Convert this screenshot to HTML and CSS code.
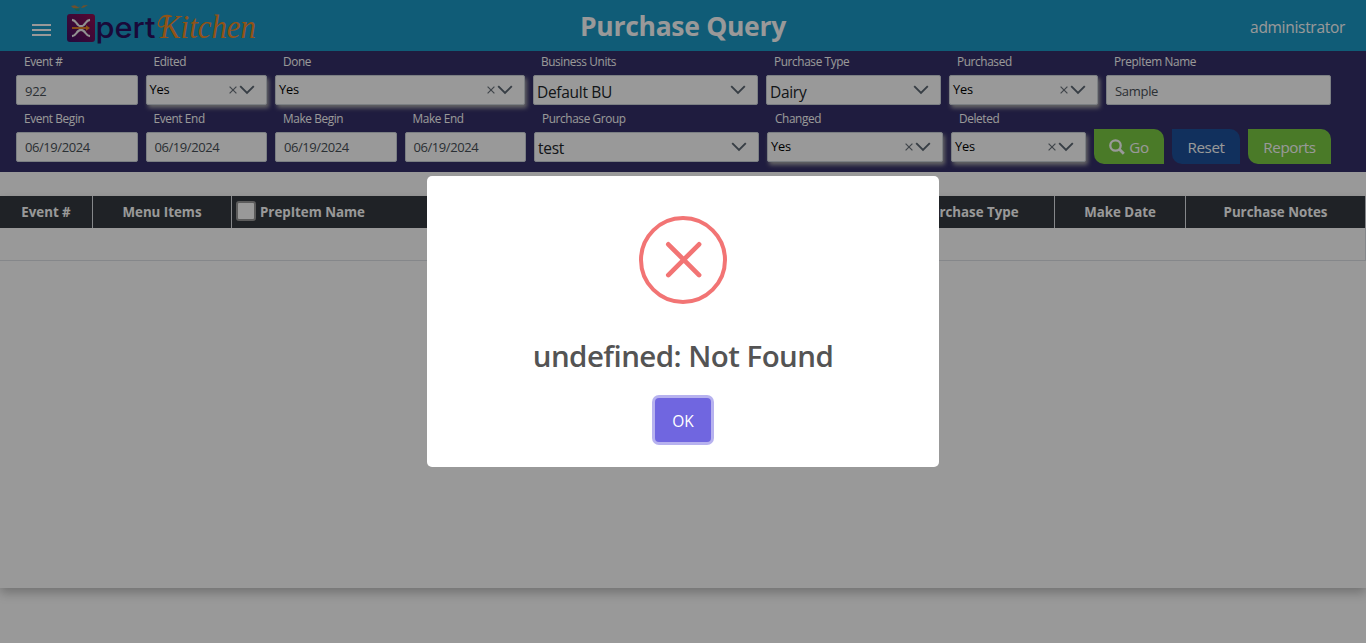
FILE: index.html
```html
<!DOCTYPE html>
<html lang="en">
<head>
<meta charset="utf-8">
<title>Purchase Query</title>
<link rel="stylesheet" href="styles.css">
</head>
<body>
<svg class="defs" width="0" height="0">
  <symbol id="chevron" viewBox="0 0 16 10"><path d="M1.2 1.2 8 8l6.8-6.8" fill="none" stroke="#5c6873" stroke-width="1.9"/></symbol>
  <symbol id="clear" viewBox="0 0 8 8"><path d="M.6.6l6.8 6.8M7.4.6.6 7.4" fill="none" stroke="#6c757d" stroke-width="1.2"/></symbol>
</svg>
<header class="topbar">
  <div class="brand">
    <div class="menu"><i></i><i></i><i></i></div>
    <svg class="logo" width="204" height="51" viewBox="0 0 204 51">
      <defs><linearGradient id="plum" x1="0" y1="1" x2="1" y2="0"><stop offset="0" stop-color="#3b1166"/><stop offset="1" stop-color="#940c50"/></linearGradient></defs>
      <path d="M5 6l4-.8 3 1.800 3-.5-4 2q-4 .5-6-2.500M17 5.500l5-.5-4 2.500-3 .5z" fill="#b8864a"/>
      <path d="M8 8.500l6 .3-1 2.200-3-.6" fill="#2f9c78"/>
      <rect x="1" y="14" width="28" height="28" rx="3" fill="url(#plum)"/>
      <path d="M6 19.800q2.500.2 4.500 3.200 2 3.200 4.500 3.200t4.500-3.200q2-3 4.500-3.200M6 36.200q2.500-.2 4.500-3.200 2-3.200 4.500-3.200t4.500 3.200q2 3 4.500 3.200" fill="none" stroke="#f2f2f2" stroke-width="2.200"/>
      <path d="M6 28h14.500" stroke="#ee8c22" stroke-width="1.800"/><path d="M20 25.200l4 2.800-4 2.800z" fill="#ee8c22"/>
      <text class="logo-pert" x="29.500" y="38" textLength="60" lengthAdjust="spacingAndGlyphs">pert</text>
      <text class="logo-kitchen" x="94" y="38" textLength="96" lengthAdjust="spacingAndGlyphs">Kitchen</text>
      <path d="M106 16.500q-8-3-12 3-3 5-.5 7 3 1.500 5-1.500" fill="none" stroke="#f28a26" stroke-width="1.300"/>
    </svg>
  </div>
  <h1>Purchase Query</h1>
  <div class="user">administrator</div>
</header>
<section class="filters">
  <div class="row">
    <div class="field w122"><label>Event #</label><div class="box input">922</div></div>
    <div class="field w121"><label>Edited</label><div class="box pick"><span>Yes</span><svg class="x"><use href="#clear"/></svg><svg class="v"><use href="#chevron"/></svg></div></div>
    <div class="field w250"><label>Done</label><div class="box pick"><span>Yes</span><svg class="x"><use href="#clear"/></svg><svg class="v"><use href="#chevron"/></svg></div></div>
    <div class="field w225"><label>Business Units</label><div class="box drop"><span>Default BU</span><svg class="v"><use href="#chevron"/></svg></div></div>
    <div class="field w175"><label>Purchase Type</label><div class="box drop"><span>Dairy</span><svg class="v"><use href="#chevron"/></svg></div></div>
    <div class="field w149"><label>Purchased</label><div class="box pick"><span>Yes</span><svg class="x"><use href="#clear"/></svg><svg class="v"><use href="#chevron"/></svg></div></div>
    <div class="field w225"><label>PrepItem Name</label><div class="box input">Sample</div></div>
  </div>
  <div class="row">
    <div class="field w122"><label>Event Begin</label><div class="box input date">06/19/2024</div></div>
    <div class="field w121"><label>Event End</label><div class="box input date">06/19/2024</div></div>
    <div class="field w122"><label>Make Begin</label><div class="box input date">06/19/2024</div></div>
    <div class="field w121"><label>Make End</label><div class="box input date">06/19/2024</div></div>
    <div class="field w225"><label>Purchase Group</label><div class="box drop"><span class="up">test</span><svg class="v"><use href="#chevron"/></svg></div></div>
    <div class="field w176"><label>Changed</label><div class="box pick"><span>Yes</span><svg class="x"><use href="#clear"/></svg><svg class="v"><use href="#chevron"/></svg></div></div>
    <div class="field w135"><label>Deleted</label><div class="box pick"><span>Yes</span><svg class="x"><use href="#clear"/></svg><svg class="v"><use href="#chevron"/></svg></div></div>
    <div class="btn go"><svg width="16" height="16" viewBox="0 0 16 16"><circle cx="6.500" cy="6.500" r="5.200" fill="none" stroke="#fff" stroke-width="2.300"/><path d="M10.300 10.300l4.500 4.500" stroke="#fff" stroke-width="2.800"/></svg>Go</div>
    <div class="btn reset">Reset</div>
    <div class="btn reports">Reports</div>
  </div>
</section>
<main class="panel">
  <div class="thead">
    <div class="c1">Event #</div><div class="c2">Menu Items</div><div class="c3"><i class="check"></i>PrepItem Name</div><div class="c4">Purchase Type</div><div class="c5">Make Date</div><div class="c6">Purchase Notes</div>
  </div>
  <div class="empty"></div>
</main>
<div class="overlay">
  <div class="modal">
    <svg width="88" height="88" viewBox="0 0 88 88"><circle cx="44" cy="44" r="42" fill="none" stroke="#f27474" stroke-width="4"/><path d="M29.300 28.300l30.800 30.800M60.100 28.300l-30.800 30.800" stroke="#f27474" stroke-width="4.700" stroke-linecap="round"/></svg>
    <h2>undefined: Not Found</h2>
    <button>OK</button>
  </div>
</div>
</body>
</html>
```
FILE: styles.css
```css
* { box-sizing: border-box; }
body { margin: 0; height: 643px; overflow: hidden; background: #fff; font-family: "Open Sans", "Noto Sans", sans-serif; color: #212529; }
.defs { display: block; }
.topbar { height: 51px; background: #1b99c6; color: #fff; display: grid; grid-template-columns: 1fr auto 1fr; align-items: center; }
.brand { display: flex; align-items: center; padding-left: 32px; }
.menu { width: 19px; height: 12px; margin: 8px 15px 0 0; display: flex; flex-direction: column; justify-content: space-between; }
.menu i { height: 2px; background: #fff; }
.logo { display: block; overflow: visible; }
.logo-pert { font: 500 29px Inter, sans-serif; fill: #2a1060; }
.logo-kitchen { font: italic 33px "Liberation Serif", serif; fill: #f28a26; }
h1 { margin: 0; padding-top: 2px; font-size: 26.500px; line-height: 49px; font-weight: 700; letter-spacing: -.3px; }
.user { text-align: right; padding: 2px 21px 0 0; font-size: 15.500px; letter-spacing: -.3px; }
.filters { height: 121px; background: #353069; padding: 1px 16px 0; }
.row { display: flex; gap: 8px; height: 57px; }
.field { flex: none; }
.w121 { width: 121.500px; } .w122 { width: 121.500px; } .w135 { width: 135px; } .w149 { width: 149px; }
.w175 { width: 175px; } .w176 { width: 176px; } .w225 { width: 225px; } .w250 { width: 250px; }
label { display: block; height: 23px; padding: 0 0 0 8px; font-size: 11.800px; line-height: 18px; color: #fff; letter-spacing: -.37px; white-space: nowrap; }
.box { height: 30px; background: #fff; border: 1px solid #ced4da; border-radius: 2px; display: flex; align-items: center; }
.box span { flex: 1; }
.input { padding: 2px 8px 0; font-size: 13px; font-weight: 500; letter-spacing: -.3px; color: #495057; }
.date { padding-top: 0; letter-spacing: -.43px; }
.pick { padding: 0 11px 1px 3px; font-size: 12.800px; font-weight: 500; letter-spacing: -.2px; color: #000; box-shadow: 2px 3px 4px #aaa; }
.pick span { padding-bottom: 2px; }
.drop { padding: 0 11px 0 3px; font-size: 15.500px; letter-spacing: -.3px; }
.drop span { padding-top: 4px; }
.drop .up { padding-top: 2px; }
.x { width: 8px; height: 8px; margin-right: 2px; }
.v { width: 16px; height: 10px; }
.btn { height: 35px; margin-top: 20px; color: #fff; font-size: 15.200px; letter-spacing: -.4px; display: flex; align-items: center; justify-content: center; gap: 4px; }
.go, .reports { background: #7ccc43; border-radius: 0 10px 0 10px; }
.go { width: 70px; } .reports { width: 83px; }
.reset { width: 68px; background: #1d509b; border-radius: 0 10px 0 10px; }
.panel { margin-top: 24px; height: 392px; background: #fff; box-shadow: 0 5px 10px rgba(0,0,0,.25); }
.thead { height: 32px; display: flex; background: #343a40; color: #fff; font-size: 13.300px; font-weight: 700; line-height: 32px; text-align: center; }
.thead div { border-right: 1px solid #dee2e6; white-space: nowrap; }
.c1 { width: 93px; } .c2 { width: 139px; } .c3 { width: 655px; display: flex; align-items: center; padding-left: 4px; } .c4 { width: 168px; } .c5 { width: 131px; } .c6 { width: 180px; }
.check { width: 20px; height: 20px; border: 2px solid #999; border-radius: 3px; background: #fff; margin: -2px 4px 0 0; }
.empty { height: 33px; border: solid #dee2e6; border-width: 0 1px 1px 0; }
.overlay { position: fixed; inset: 0; background: rgba(0,0,0,.4); display: grid; place-items: center; }
.modal { width: 512px; height: 291px; background: #fff; border-radius: 5px; display: flex; flex-direction: column; align-items: center; padding-top: 40px; }
.modal h2 { margin: 29px 0 0; font-size: 29.500px; line-height: 45px; font-weight: 600; color: #545454; letter-spacing: -.55px; white-space: nowrap; }
.modal button { margin: 20px 0 0; width: 56px; height: 44px; border: 0; border-radius: 4px; background: #7066e0; color: #fff; font: 15.500px "Open Sans", sans-serif; padding: 2px 0 0; box-shadow: 0 0 0 3px #b7b2ef; }
```
